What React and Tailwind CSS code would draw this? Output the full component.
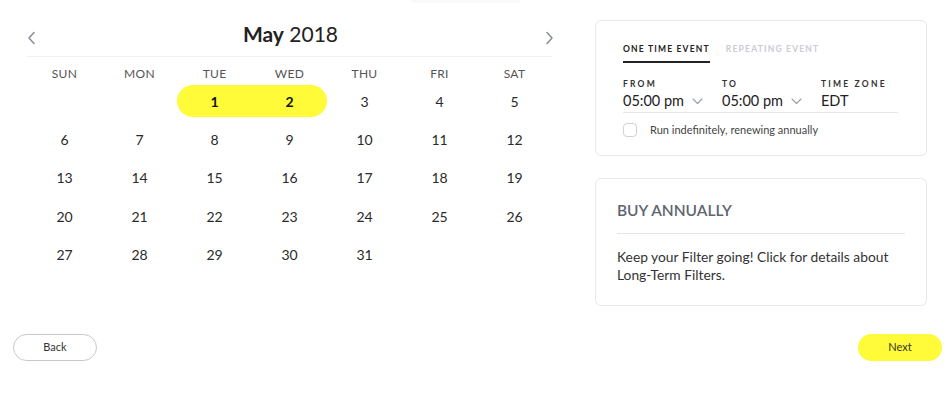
import React from 'react';

const days = ['SUN', 'MON', 'TUE', 'WED', 'THU', 'FRI', 'SAT'];
const weeks = [
    [null, null, 1, 2, 3, 4, 5],
    [6, 7, 8, 9, 10, 11, 12],
    [13, 14, 15, 16, 17, 18, 19],
    [20, 21, 22, 23, 24, 25, 26],
    [27, 28, 29, 30, 31, null, null],
];

const Chevron = ({ dir }) => (
    <svg width="10" height="14" viewBox="0 0 10 14" fill="none">
        <path
            d={dir === 'left' ? 'M7 1.5 L2 7 L7 12.5' : 'M3 1.5 L8 7 L3 12.5'}
            stroke="#8a8f99"
            strokeWidth="1.6"
            strokeLinecap="round"
            strokeLinejoin="round"
        />
    </svg>
);

const Caret = () => (
    <svg width="11" height="7" viewBox="0 0 11 7" fill="none">
        <path d="M1 1 L5.5 5.5 L10 1" stroke="#9aa0a8" strokeWidth="1.1" strokeLinecap="round" strokeLinejoin="round" />
    </svg>
);

const Calendar = () => (
    <div className="w-[525px] ml-[27px]">
        {/* Header */}
        <div className="flex items-center justify-between h-[37px] border-b border-[#f0f0f0]">
            <button className="w-[10px] flex items-center"><Chevron dir="left" /></button>
            <div className="text-[21px] text-[#222] leading-none pb-[9px]">
                <span className="font-bold">May</span> 2018
            </div>
            <button className="w-[10px] flex items-center mr-[-2px]"><Chevron dir="right" /></button>
        </div>

        {/* Day names */}
        <div className="grid grid-cols-7 pt-[9px] h-[25px]">
            {days.map((d) => (
                <div key={d} className="text-center text-[12px] leading-[16px] text-[#555] tracking-[0.3px]">{d}</div>
            ))}
        </div>

        {/* Dates */}
        {weeks.map((week, wi) => (
            <div key={wi} className="grid grid-cols-7 h-[38.3px] items-center">
                {week.map((n, di) => {
                    const sel = n === 1 || n === 2;
                    return (
                        <div key={di} className={`h-[32px] flex items-center justify-center text-[14px] ${
                            sel ? 'bg-[#fffb38] font-bold text-[#111]' : 'text-[#2a2a2a]'
                        } ${n === 1 ? 'rounded-l-full' : ''} ${n === 2 ? 'rounded-r-full' : ''}`}>
                            {n}
                        </div>
                    );
                })}
            </div>
        ))}
    </div>
);

const EventCard = () => (
    <div className="w-[332px] h-[136px] border border-[#e9e9e9] rounded-[6px] px-[27px] pt-[22px]">
        <div className="flex items-end gap-[16px] text-[8.5px] font-bold tracking-[1.2px]">
            <div className="text-[#222] border-b-2 border-[#222] pb-[5px]">ONE TIME EVENT</div>
            <div className="text-[#c9ccd2] pb-[7px]">REPEATING EVENT</div>
        </div>
        <div className="flex mt-[15px] border-b border-[#e6e6e6] w-[275px] pb-[1px]">
            <div className="w-[99px]">
                <div className="text-[8.5px] leading-[12px] font-bold tracking-[2.2px] text-[#333]">FROM</div>
                <div className="flex items-center text-[14.5px] leading-[20px] text-[#222] pt-[1px]">
                    05:00 pm
                    <span className="ml-[8px] mt-[1px]"><Caret /></span>
                </div>
            </div>
            <div className="w-[99px]">
                <div className="text-[8.5px] leading-[12px] font-bold tracking-[2.2px] text-[#333]">TO</div>
                <div className="flex items-center text-[14.5px] leading-[20px] text-[#222] pt-[1px]">
                    05:00 pm
                    <span className="ml-[8px] mt-[1px]"><Caret /></span>
                </div>
            </div>
            <div>
                <div className="text-[8.5px] leading-[12px] font-bold tracking-[2.2px] text-[#333]">TIME ZONE</div>
                <div className="text-[14.5px] leading-[20px] text-[#222] pt-[1px]">EDT</div>
            </div>
        </div>
        <label className="flex items-center mt-[9px] gap-[13px]">
            <span className="w-[14px] h-[14px] rounded-[4px] border border-[#cfd2d8] bg-white"></span>
            <span className="text-[11px] text-[#444]">Run indefinitely, renewing annually</span>
        </label>
    </div>
);

const BuyCard = () => (
    <div className="w-[332px] h-[128px] border border-[#e9e9e9] rounded-[6px] px-[21px] pt-[21px] mt-[22px]">
        <div className="text-[15.5px] leading-[20px] font-semibold text-[#5e6571] pb-[13px] border-b border-[#e3e5e8]">BUY ANNUALLY</div>
        <p className="text-[13.8px] leading-[18px] text-[#333] mt-[14px]">
            Keep your Filter going! Click for details about Long-Term Filters.
        </p>
    </div>
);

export default function App() {
    return (
        <div className="w-[952px] h-[396px] bg-white flex flex-col" style={{ fontFamily: 'Lato, "Noto Sans", sans-serif' }}>
            <div className="h-[3px] flex justify-center">
                <div className="w-[110px] h-[3px] ml-[-20px] bg-[#f9f9f9] rounded-b-[4px]"></div>
            </div>
            <div className="flex pt-[17px]">
                <Calendar />
                <div className="ml-[43px]">
                    <EventCard />
                    <BuyCard />
                </div>
            </div>
            <div className="flex justify-between px-[10px] mt-[28px]">
                <button className="w-[84px] h-[27px] ml-[3px] rounded-full border border-[#c8c8c8] text-[11px] text-[#333]">Back</button>
                <button className="w-[84px] h-[27px] rounded-full bg-[#fffb38] text-[11px] text-[#333]">Next</button>
            </div>
        </div>
    );
}
